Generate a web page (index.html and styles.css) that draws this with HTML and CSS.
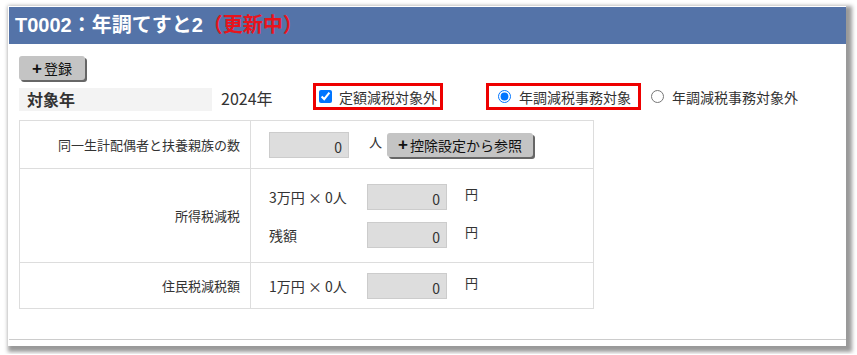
FILE: index.html
```html
<!DOCTYPE html>
<html lang="ja">
<head>
    <meta charset="UTF-8">
    <title>年調てすと2</title>
    <link rel="stylesheet" href="styles.css">
</head>
<body>
    <div class="dialog">
        <div class="head">T0002：年調てすと2<span class="state">（更新中）</span></div>
        <div class="content">
            <button class="btn" type="button"><span class="plus">+</span>登録</button>
            <div class="year-row">
                <div class="year-label">対象年</div>
                <div class="year-value">2024年</div>
                <label class="red-box box-check"><input type="checkbox" checked> 定額減税対象外</label>
                <label class="red-box box-radio"><input type="radio" name="taisho" checked> 年調減税事務対象</label>
                <label class="plain-radio"><input type="radio" name="taisho"> 年調減税事務対象外</label>
            </div>
            <table class="grid">
                <tr class="r1">
                    <th>同一生計配偶者と扶養親族の数</th>
                    <td>
                        <div class="line">
                            <input class="num" type="text" value="0" readonly>
                            <span class="unit unit-nin">人</span>
                            <button class="btn btn-ref" type="button"><span class="plus">+</span>控除設定から参照</button>
                        </div>
                    </td>
                </tr>
                <tr class="r2">
                    <th>所得税減税</th>
                    <td>
                        <div class="line">
                            <span class="calc">3万円 × 0人</span>
                            <input class="num" type="text" value="0" readonly>
                            <span class="unit">円</span>
                        </div>
                        <div class="line gap">
                            <span class="calc">残額</span>
                            <input class="num" type="text" value="0" readonly>
                            <span class="unit">円</span>
                        </div>
                    </td>
                </tr>
                <tr class="r3">
                    <th>住民税減税額</th>
                    <td>
                        <div class="line">
                            <span class="calc">1万円 × 0人</span>
                            <input class="num" type="text" value="0" readonly>
                            <span class="unit">円</span>
                        </div>
                    </td>
                </tr>
            </table>
        </div>
    </div>
</body>
</html>
```
FILE: styles.css
```css
html, body {
    margin: 0;
    background: #fff;
}
body {
    padding: 6px 11px 8px 8px;
    font-family: "Noto Sans CJK JP", "Noto Sans", sans-serif;
    color: #333;
}
.dialog {
    background: #fff;
    padding: 1px 0 0 1px;
    height: 340px;
    box-sizing: border-box;
    box-shadow: 3px 3px 4px 3px rgba(0, 0, 0, 0.4);
    display: flex;
    flex-direction: column;
}
.head {
    background: #5473a8;
    color: #fff;
    height: 37px;
    line-height: 36px;
    padding-left: 6px;
    font-size: 20px;
    font-weight: bold;
    font-family: "Liberation Sans", "Noto Sans CJK JP", sans-serif;
}
.state {
    color: #e8141c;
}
.content {
    padding: 12px 10px 0 10px;
    border-bottom: 1px solid #ccc;
    flex: 1;
    margin-bottom: 6px;
}
.btn {
    background: #c4c4c4;
    border: none;
    border-radius: 3px;
    box-shadow: 2px 2px 0 #666;
    font-family: "Noto Sans CJK JP", sans-serif;
    font-size: 14px;
    color: #111;
    height: 24px;
    width: 66px;
    padding: 0;
    display: flex;
    align-items: center;
    justify-content: center;
}
.plus {
    font-family: "Liberation Sans", sans-serif;
    font-weight: bold;
    font-size: 17px;
    margin-right: 2px;
    line-height: 1;
}
.year-row {
    display: flex;
    align-items: center;
    margin-top: 3px;
    height: 27px;
}
.year-label {
    background: #f3f3f3;
    width: 185px;
    height: 23px;
    line-height: 23px;
    padding-left: 8px;
    margin-top: 5px;
    font-size: 16px;
    font-weight: bold;
}
.year-value {
    margin-left: 9px;
    margin-top: 3px;
    font-size: 16px;
    width: 92px;
}
.red-box {
    border: 3px solid #ee0000;
    height: 27px;
    box-sizing: border-box;
    display: flex;
    align-items: center;
    font-size: 14px;
    gap: 6px;
}
.red-box input, .plain-radio input {
    margin: 0;
    width: 13px;
    height: 13px;
}
.box-check {
    width: 130px;
    padding-left: 3px;
    gap: 7px;
}
.box-radio {
    width: 155px;
    margin-left: 43px;
    padding-left: 9px;
    gap: 8px;
}
.plain-radio {
    display: flex;
    align-items: center;
    gap: 8px;
    margin-left: 10px;
    font-size: 14px;
}
.grid {
    border-collapse: collapse;
    margin-top: 10px;
    width: 575px;
}
.grid th, .grid td {
    border: 1px solid #ddd;
}
.grid th {
    width: 220px;
    font-weight: normal;
    text-align: right;
    padding: 0 10px 0 0;
    font-size: 13px;
}
.grid td {
    padding: 0 0 0 18px;
}
.r1 {
    height: 48px;
}
.r2 {
    height: 94px;
}
.r3 {
    height: 46px;
}
.line {
    display: flex;
    align-items: center;
}
.line.gap {
    margin-top: 12px;
}
.num {
    width: 80px;
    height: 26px;
    box-sizing: border-box;
    background: #ddd;
    border: 1px solid #ccc;
    text-align: right;
    padding: 4px 6px 0 0;
    font-size: 14px;
    font-family: "Noto Sans CJK JP", sans-serif;
    color: #333;
}
.unit {
    font-size: 13px;
    align-self: flex-start;
    margin-left: 18px;
}
.unit-nin {
    margin-left: 20px;
    margin-right: 5px;
}
.btn-ref {
    width: 146px;
}
.calc {
    width: 98px;
    font-size: 14px;
}
```
